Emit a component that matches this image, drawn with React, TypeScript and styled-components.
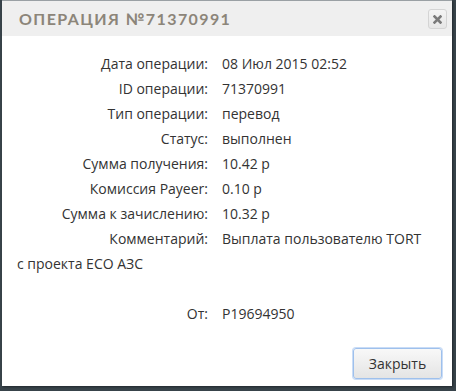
import React from "react";
import styled, { createGlobalStyle } from "styled-components";

const Global = createGlobalStyle`
  html, body { margin: 0; padding: 0; background: #38434a; }
  body { font-family: "Open Sans", "Noto Sans", sans-serif; }
`;

const Page = styled.div`
  width: 456px;
  height: 391px;
  padding: 0 0 0 2px;
  box-sizing: border-box;
  background: #38434a;
`;

const Dialog = styled.div`
  width: 450px;
  height: 386px;
  box-sizing: border-box;
  background: #fff;
  border-top: 1px solid #9aa0a4;
  display: flex;
  flex-direction: column;
  box-shadow: 1px 1px 2px rgba(0, 0, 0, 0.4);
`;

const Header = styled.div`
  height: 35px;
  background: #efefef;
  display: flex;
  align-items: center;
  justify-content: space-between;
  padding: 0 5px 0 17px;
  box-sizing: border-box;
`;

const Title = styled.h1`
  margin: 0;
  font-family: "Lato", "Open Sans", sans-serif;
  font-size: 16px;
  font-weight: 700;
  letter-spacing: 1.4px;
  color: #8c8579;
  text-transform: uppercase;
`;

const CloseButton = styled.button`
  width: 19px;
  height: 20px;
  padding: 0;
  border: 1px solid #d4d4d4;
  border-radius: 3px;
  background: linear-gradient(#f4f4f4, #e6e6e6);
  display: flex;
  align-items: center;
  justify-content: center;
  margin-top: 1px;
`;

const Body = styled.div`
  flex: 1;
  padding: 15px 10px 0 15px;
  font-size: 14px;
  line-height: 25px;
  color: #333;
`;

const Row = styled.div`
  display: block;
`;

const Label = styled.span`
  display: inline-block;
  width: 191px;
  text-align: right;
  margin-right: 14px;
`;

const Spacer = styled.div`
  height: 25px;
`;

const Footer = styled.div`
  display: flex;
  justify-content: flex-end;
  padding: 0 10px 7px 0;
`;

const Button = styled.button`
  width: 89px;
  height: 31px;
  font-family: "Open Sans", "Noto Sans", sans-serif;
  font-size: 14px;
  color: #333;
  background: linear-gradient(#f8f8f8, #e4e4e4);
  border: 1px solid #9ec0ec;
  border-radius: 3px;
  box-shadow: 0 0 0 1px #c9dcf6;
`;

const rows: [string, string][] = [
  ["Дата операции:", "08 Июл 2015 02:52"],
  ["ID операции:", "71370991"],
  ["Тип операции:", "перевод"],
  ["Статус:", "выполнен"],
  ["Сумма получения:", "10.42 р"],
  ["Комиссия Payeer:", "0.10 р"],
  ["Сумма к зачислению:", "10.32 р"],
];

export default function App() {
  return (
    <Page>
      <Global />
      <Dialog>
        <Header>
          <Title>Операция №71370991</Title>
          <CloseButton aria-label="close">
            <svg width="9" height="9" viewBox="0 0 9 9">
              <path d="M1.5 1.5 L7.5 7.5 M7.5 1.5 L1.5 7.5" stroke="#7a7a7a" strokeWidth="2.6" strokeLinecap="square" />
            </svg>
          </CloseButton>
        </Header>
        <Body>
          {rows.map(([l, v]) => (
            <Row key={l}>
              <Label>{l}</Label>
              {v}
            </Row>
          ))}
          <Row>
            <Label>Комментарий:</Label>
            Выплата пользователю TORT
            <br />
            с проекта ECO АЗС
          </Row>
          <Spacer />
          <Row>
            <Label>От:</Label>
            P19694950
          </Row>
        </Body>
        <Footer>
          <Button>Закрыть</Button>
        </Footer>
      </Dialog>
    </Page>
  );
}
